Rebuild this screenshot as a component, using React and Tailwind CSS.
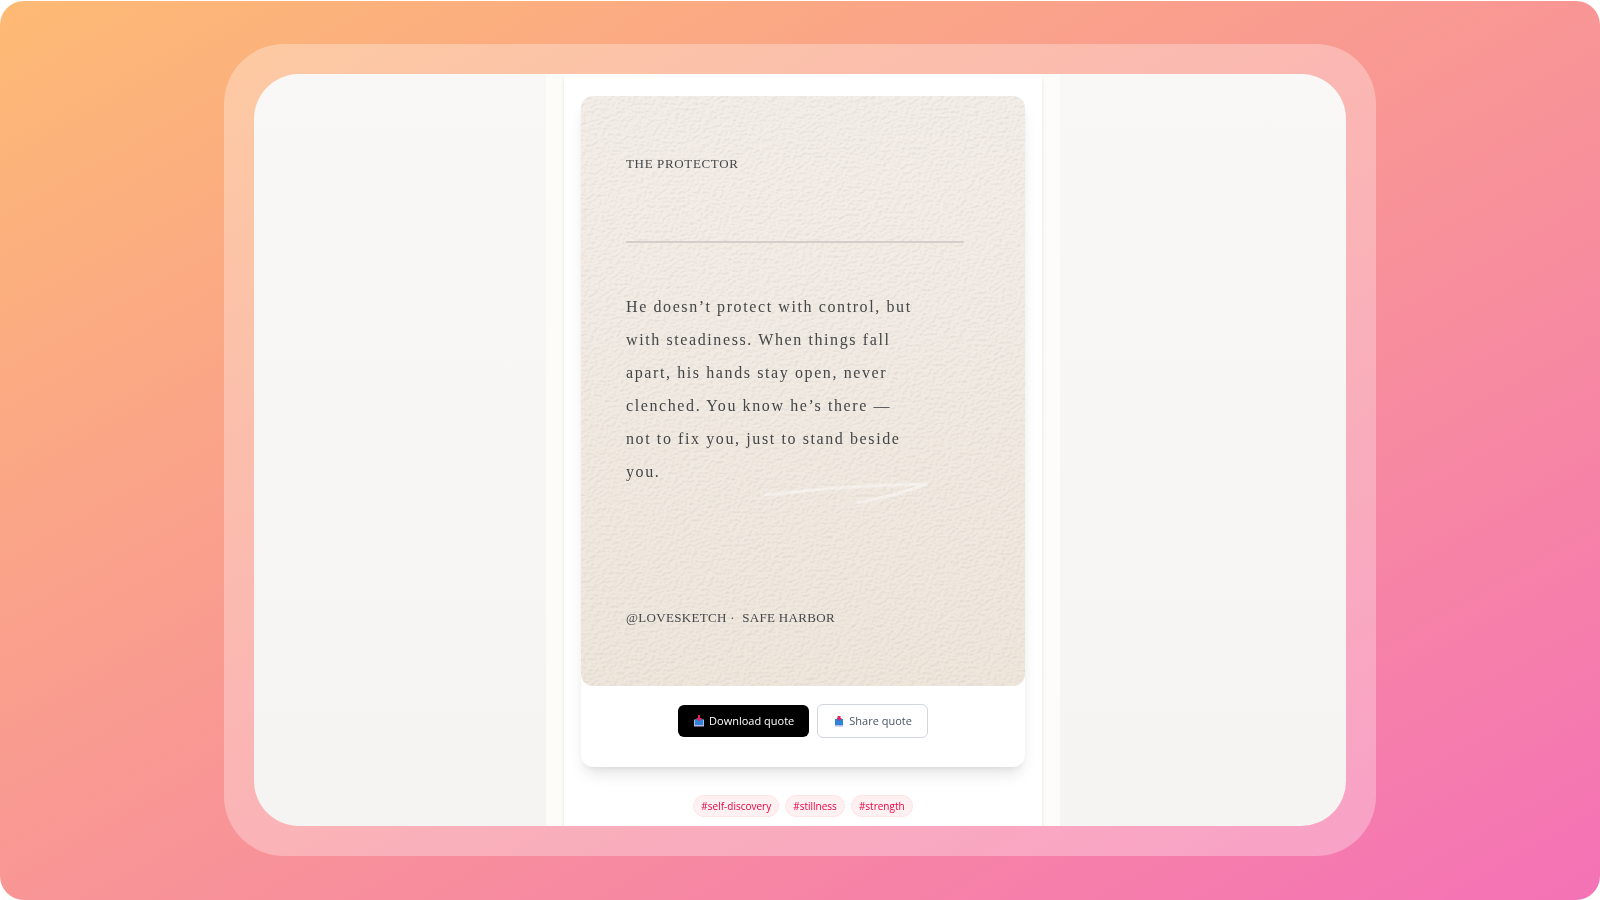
const tags = ['#self-discovery', '#stillness', '#strength'];

function PaperTexture() {
    return (
        <svg className="absolute inset-0 h-full w-full mix-blend-multiply" aria-hidden="true">
            <filter id="paper" x="0" y="0" width="100%" height="100%" colorInterpolationFilters="sRGB">
                <feTurbulence type="fractalNoise" baseFrequency="0.26 0.36" numOctaves="4" seed="8" result="noise" />
                <feDiffuseLighting in="noise" lightingColor="#fffefc" surfaceScale="0.2" diffuseConstant="1.15">
                    <feDistantLight azimuth="235" elevation="60" />
                </feDiffuseLighting>
            </filter>
            <rect width="100%" height="100%" filter="url(#paper)" />
        </svg>
    );
}

function TrayIcon({ up }) {
    return (
        <svg className="h-3 w-3" viewBox="0 0 12 12" aria-hidden="true">
            <path d={up ? 'M2 5h8v6.500H2z' : 'M1 4.500h10v7H1z'} fill="#b9b4e6" />
            <path d={up ? 'M2 4h8v6H2z' : 'M2 4.500h8V10H2z'} fill="#2b86d9" />
            <path d={up ? 'M4.500 1h3v2H9L6 6 3.500 3h1z' : 'M5 0h2v3h2L6 6.500 3 3h2z'} fill="#e0245e" />
        </svg>
    );
}

function QuoteImage() {
    return (
        <div className="relative overflow-hidden rounded-xl bg-gradient-to-b from-[#f3eeea] to-[#eee7de] px-[45px] pt-14 pb-14 font-['Liberation_Serif',serif] text-[#444648]">
            <PaperTexture />
            <svg className="absolute top-[384px] left-[180px] h-8 w-44" viewBox="0 0 176 32" fill="none" aria-hidden="true">
                <path d="M3 15C55 9 110 5 166 4 145 12 122 18 96 23" stroke="#fff" strokeOpacity=".38" strokeWidth="3" />
            </svg>
            <div className="relative">
                <h2 className="text-[13px] leading-6 tracking-wider">THE PROTECTOR</h2>
                <hr className="mt-[65px] mr-4 border-t-2 border-[#d3cec9]" />
                <p className="mt-[47px] max-w-72 text-base leading-[33px] tracking-widest">
                    He doesn’t protect with control, but with steadiness. When things fall apart, his hands stay open, never clenched. You know he’s there — not to fix you, just to stand beside you.
                </p>
                <p className="mt-[118px] text-[13px] leading-6 tracking-wide">@LOVESKETCH · &nbsp;SAFE HARBOR</p>
            </div>
        </div>
    );
}

export default function App() {
    return (
        <div className="h-screen bg-white pt-px font-['Open_Sans',sans-serif]">
            <div className="h-full rounded-3xl bg-[linear-gradient(to_bottom_right,#fdba74,#f472b6)] px-[14%] pt-[43px] pb-11">
                <div className="h-full rounded-[60px] bg-white/30 p-[30px]">
                    <div className="flex h-full justify-center overflow-hidden rounded-[45px] bg-gradient-to-b from-[#f9f8f7] to-[#f5f4f3]">
                        <main className="ml-1.5 h-fit min-h-full w-[514px] bg-[#fdfcf8] px-[18px]">
                            <div className="bg-white px-[17px] pt-[22px] pb-9 shadow-md">
                                <section className="rounded-xl bg-white shadow-lg">
                                    <QuoteImage />
                                    <div className="flex items-center justify-center gap-2 pt-[18px] pb-[29px] text-[11px]">
                                        <button type="button" className="flex h-8 items-center gap-1 rounded-md bg-black px-[15px] font-medium text-white">
                                            <TrayIcon />
                                            Download quote
                                        </button>
                                        <button type="button" className="flex h-[34px] items-center gap-1 rounded-md border border-gray-300 bg-white px-[15px] text-gray-600">
                                            <TrayIcon up />
                                            Share quote
                                        </button>
                                    </div>
                                </section>
                                <div className="mt-7 flex justify-center gap-1.5">
                                    {tags.map((tag) => (
                                        <span key={tag} className="rounded-full border border-rose-100 bg-rose-50 px-[7px] text-[10px] leading-5 text-rose-600">
                                            {tag}
                                        </span>
                                    ))}
                                </div>
                            </div>
                        </main>
                    </div>
                </div>
            </div>
        </div>
    );
}
